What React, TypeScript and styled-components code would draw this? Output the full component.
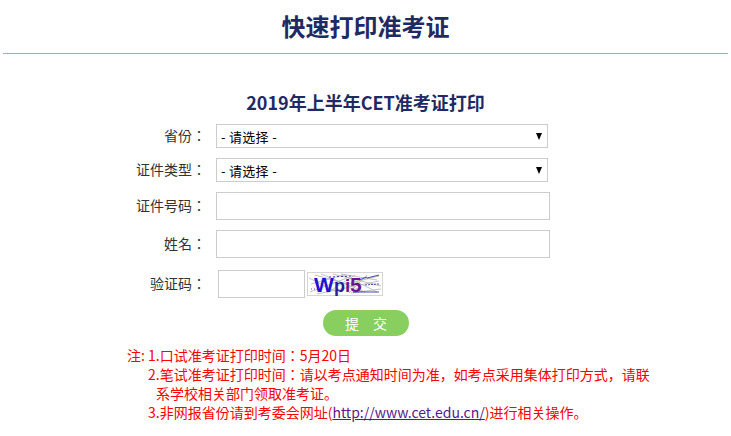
import styled, { createGlobalStyle } from "styled-components";

const CJK = `"Noto Sans CJK SC", "Noto Sans", sans-serif`;

const GlobalStyle = createGlobalStyle`
  html, body {
    margin: 0;
    padding: 0;
    background: #fff;
    font-family: ${CJK};
  }
`;

function Captcha() {
  return (
    <CaptchaImage viewBox="0 0 76 24" width="76" height="24">
      <rect x="0.5" y="0.5" width="75" height="23" fill="#fff" stroke="#aaa" strokeDasharray="1 1" />
      <g stroke="#b0b0b0" strokeWidth="0.8" fill="none">
        <path d="M8 3 L40 12 L72 4" />
        <path d="M14 2 L58 20" />
        <path d="M26 2 L74 14" />
        <path d="M4 12 L36 3 L70 20" />
        <path d="M48 3 L20 21" />
        <path d="M60 3 L42 21" />
        <path d="M3 20 L40 6" />
        <path d="M10 22 L72 9" />
        <path d="M2 6 L30 20" />
        <path d="M34 2 L70 8" />
        <path d="M44 21 L74 17" />
      </g>
      <g stroke="#1a1a9a" strokeWidth="0.8" fill="none">
        <path d="M4 17 H12" strokeDasharray="1 2" />
        <path d="M46 20 H72" />
        <path d="M52 8 L60 5" />
        <path d="M60 6 L72 3" />
        <path d="M58 13 L72 12" strokeDasharray="2 1" />
        <path d="M22 5 L46 4" strokeDasharray="2 2" />
      </g>
      <CaptchaChar x="7" y="20" fontSize="21" fill="#2410d0">
        W
      </CaptchaChar>
      <CaptchaChar x="27" y="20" fontSize="18" fill="#2a1a9c">
        p
      </CaptchaChar>
      <CaptchaChar x="38" y="20" fontSize="19" fill="#6a1490">
        i
      </CaptchaChar>
      <CaptchaChar x="43" y="20" fontSize="21" fill="#6a1490">
        5
      </CaptchaChar>
    </CaptchaImage>
  );
}

export default function App() {
  return (
    <>
      <GlobalStyle />
      <Header>
        <Title>快速打印准考证</Title>
      </Header>
      <Main>
        <SubTitle>2019年上半年CET准考证打印</SubTitle>
        <Form>
          <Row>
            <Label>省份：</Label>
            <SelectWrap>
              <Select defaultValue="">
                <option value="">- 请选择 -</option>
              </Select>
            </SelectWrap>
          </Row>
          <Row>
            <Label>证件类型：</Label>
            <SelectWrap>
              <Select defaultValue="">
                <option value="">- 请选择 -</option>
              </Select>
            </SelectWrap>
          </Row>
          <Row>
            <Label>证件号码：</Label>
            <Input type="text" />
          </Row>
          <Row>
            <Label>姓名：</Label>
            <Input type="text" />
          </Row>
          <CaptchaRow>
            <Label>验证码：</Label>
            <CaptchaInput type="text" />
            <Captcha />
          </CaptchaRow>
          <SubmitRow>
            <SubmitButton type="button">提交</SubmitButton>
          </SubmitRow>
        </Form>
        <Notes>
          <NoteMark>注:</NoteMark>
          <NoteList>
            <NoteItem>1.口试准考证打印时间：5月20日</NoteItem>
            <NoteItem>
              2.笔试准考证打印时间：请以考点通知时间为准，如考点采用集体打印方式，请联系学校相关部门领取准考证。
            </NoteItem>
            <NoteItem>
              3.非网报省份请到考委会网址(<NoteLink href="#">http://www.cet.edu.cn/</NoteLink>)进行相关操作。
            </NoteItem>
          </NoteList>
        </Notes>
      </Main>
    </>
  );
}

const Header = styled.header`
  height: 53px;
  margin: 0 3px;
  border-bottom: 1px solid #b9a3b4;
  display: flex;
  justify-content: center;
  align-items: flex-start;
`;

const Title = styled.h1`
  margin: 0;
  font-size: 24px;
  line-height: 52px;
  font-weight: 700;
  color: #1f2a63;
`;

const Main = styled.main`
  width: 731px;
`;

const SubTitle = styled.h2`
  margin: 35px 0 9px;
  height: 26px;
  line-height: 26px;
  font-size: 18px;
  font-weight: 700;
  text-align: center;
  color: #1f2a63;
`;

const Form = styled.form`
  display: flex;
  flex-direction: column;
  gap: 10px;
`;

const Row = styled.div`
  display: flex;
  align-items: center;
  gap: 10px;
`;

const CaptchaRow = styled(Row)`
  margin-top: 2px;
  gap: 0;
`;

const Label = styled.label`
  width: 206px;
  padding-bottom: 2px;
  text-align: right;
  font-family: "Noto Sans CJK JP", ${CJK};
  font-size: 14px;
  color: #333;
  flex: none;
`;

const SelectWrap = styled.div`
  position: relative;
  width: 332px;
  height: 24px;

  &::after {
    content: "";
    position: absolute;
    right: 6px;
    top: 9px;
    border-left: 3.5px solid transparent;
    border-right: 3.5px solid transparent;
    border-top: 7px solid #000;
  }
`;

const Select = styled.select`
  display: block;
  appearance: none;
  width: 100%;
  height: 100%;
  box-sizing: border-box;
  padding: 0 0 0 4px;
  border: 1px solid #ccc;
  border-radius: 0;
  background: #fff;
  color: #000;
  font-family: ${CJK};
  font-size: 13px;
  letter-spacing: 0.3px;
  outline: none;
`;

const Input = styled.input`
  width: 334px;
  height: 28px;
  box-sizing: border-box;
  border: 1px solid #ccc;
  background: #fff;
  outline: none;
`;

const CaptchaInput = styled(Input)`
  width: 87px;
  margin-left: 12px;
`;

const CaptchaImage = styled.svg`
  display: block;
  margin-left: 2px;
`;

const CaptchaChar = styled.text`
  font-family: "Liberation Sans", Arial, sans-serif;
  font-weight: 700;
`;

const SubmitRow = styled.div`
  display: flex;
  justify-content: flex-start;
  margin: 2px 0 0 323px;
`;

const SubmitButton = styled.button`
  width: 86px;
  height: 26px;
  padding: 0 0 0 14px;
  border: none;
  border-radius: 13px;
  background: #88cf60;
  color: #fff;
  font-family: ${CJK};
  font-size: 14px;
  letter-spacing: 14px;
`;

const Notes = styled.section`
  display: flex;
  margin: 10px 0 0 127px;
  width: 527px;
  font-family: "Noto Sans CJK JP", ${CJK};
  font-size: 14px;
  line-height: 19px;
  color: #f00;
`;

const NoteMark = styled.span`
  flex: none;
  width: 21px;
`;

const NoteList = styled.div`
  flex: 1;
`;

const NoteItem = styled.div`
  padding-left: 8px;
  text-indent: -8px;
`;

const NoteLink = styled.a`
  color: #551a8b;
  text-decoration: underline;
`;
